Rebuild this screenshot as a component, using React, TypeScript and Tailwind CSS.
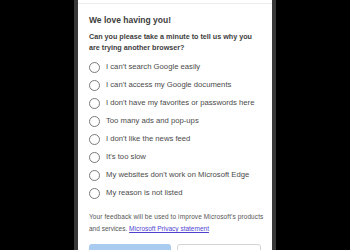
export default function App() {
  const reasons = [
    "I can't search Google easily",
    "I can't access my Google documents",
    "I don't have my favorites or passwords here",
    "Too many ads and pop-ups",
    "I don't like the news feed",
    "It's too slow",
    "My websites don't work on Microsoft Edge",
    "My reason is not listed",
  ]

  return (
    <div className="h-[250px] w-[350px] overflow-hidden bg-black font-['Liberation_Sans',Arial,sans-serif]">
      <div className="mx-auto h-full w-[202px] bg-[#383838] px-[4px]">
        <div className="h-full bg-white">
          {/* header edge */}
          <div className="h-[3px]" />
          <div className="h-[1px] bg-[#ececec]" />

          <div className="px-[11px] pt-[10px]">
            {/* Title */}
            <h1 className="text-[8.5px] font-bold leading-[12px] text-[#3d3d3d]">We love having you!</h1>
            <p className="mt-[5px] text-[7.2px] font-bold leading-[11px] text-[#3d3d3d]">
              Can you please take a minute to tell us why you are trying another browser?
            </p>

            {/* Options */}
            <div className="mt-[5px] flex flex-col">
              {reasons.map((r) => (
                <label key={r} className="flex h-[18px] items-center gap-[6px]">
                  <span className="h-[11px] w-[11px] shrink-0 rounded-full border border-[#7a7a7a] bg-white" />
                  <span className="text-[7.7px] leading-none text-[#4a4a4a]">{r}</span>
                </label>
              ))}
            </div>

            {/* Footer */}
            <div className="mt-[9px] text-[6.5px] leading-[12px] text-[#555]">
              <p className="whitespace-nowrap tracking-[0.1px]">Your feedback will be used to improve Microsoft's products</p>
              <p className="whitespace-nowrap">
                and services. <a className="text-[#4f3fd1] underline">Microsoft Privacy statement</a>
              </p>
            </div>

            {/* Buttons */}
            <div className="mt-[9px] flex gap-[6px]">
              <button className="h-[24px] flex-1 rounded-[3px] bg-[#a9cbef] pt-[4px] text-[7.6px] text-white">
                Submit
              </button>
              <button className="h-[24px] flex-1 rounded-[3px] border border-[#d4d4d4] bg-white pt-[3px] text-[7.6px] text-[#333]">
                Cancel
              </button>
            </div>
          </div>
        </div>
      </div>
    </div>
  )
}
